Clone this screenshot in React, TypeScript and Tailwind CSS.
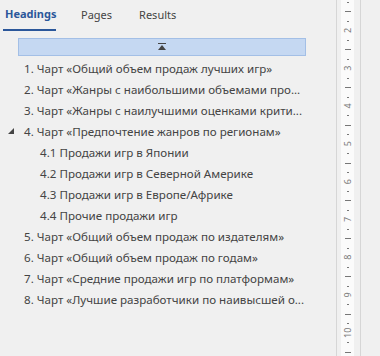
import React from 'react';

const items = [
    { label: '1. Чарт «Общий объем продаж лучших игр»', level: 1 },
    { label: '2. Чарт «Жанры с наибольшими объемами про...', level: 1 },
    { label: '3. Чарт «Жанры с наилучшими оценками крити...', level: 1 },
    { label: '4. Чарт «Предпочтение жанров по регионам»', level: 1, open: true },
    { label: '4.1 Продажи игр в Японии', level: 2 },
    { label: '4.2 Продажи игр в Северной Америке', level: 2 },
    { label: '4.3 Продажи игр в Европе/Африке', level: 2 },
    { label: '4.4 Прочие продажи игр', level: 2 },
    { label: '5. Чарт «Общий объем продаж по издателям»', level: 1 },
    { label: '6. Чарт «Общий объем продаж по годам»', level: 1 },
    { label: '7. Чарт «Средние продажи игр по платформам»', level: 1 },
    { label: '8. Чарт «Лучшие разработчики по наивысшей о...', level: 1 },
];

function Ruler() {
    const step = 9.45;
    const ticks = [];
    for (let i = 0; i < 38; i++) {
        const y = 2 + i * step;
        const k = i % 4;
        if (k === 3) {
            const n = (i + 1) / 4 + 1;
            ticks.push(
                <text
                    key={i}
                    x={0}
                    y={0}
                    transform={`translate(6.5 ${y}) rotate(-90)`}
                    textAnchor="middle"
                    dominantBaseline="central"
                    fontSize="9"
                    fill="#7a7a7a"
                    fontFamily="'Noto Sans', sans-serif"
                >
                    {n}
                </text>
            );
        } else if (k === 1) {
            ticks.push(<rect key={i} x={4} y={Math.round(y)} width={6} height={1} fill="#777" />);
        } else {
            ticks.push(<rect key={i} x={6} y={Math.round(y)} width={2} height={1} fill="#777" />);
        }
    }
    return (
        <svg width="13" height="356" className="block">
            {ticks}
        </svg>
    );
}

export default function App() {
    return (
        <div
            className="flex w-[380px] h-[356px] bg-[#f0f0f0] overflow-hidden text-[#444]"
            style={{ fontFamily: "'Noto Sans', 'Open Sans', sans-serif" }}
        >
            {/* Navigation pane */}
            <div className="w-[337px] shrink-0 border-r border-[#d6d6d6] flex flex-col">
                <div className="flex h-[31px] items-stretch text-[11px]">
                    <div className="ml-[3px] w-[53px] pl-[2px] flex items-center whitespace-nowrap font-bold text-[#2b579a] border-b-2 border-[#2b579a]">
                        Headings
                    </div>
                    <div className="ml-[25px] flex items-center">Pages</div>
                    <div className="ml-[27px] flex items-center">Results</div>
                </div>

                <div className="ml-[18px] w-[288px] mt-[7px] h-[18px] bg-[#c5d8f2] border border-[#a3bfe6] flex items-center justify-center">
                    <svg width="8" height="8" viewBox="0 0 8 8">
                        <rect x="0" y="0" width="8" height="1" fill="#444" />
                        <polygon points="4,2 8,7 0,7" fill="#444" />
                    </svg>
                </div>

                <ul className="mt-[2px] text-[11.6px]">
                    {items.map((it) => (
                        <li key={it.label} className="h-[21px] flex items-center relative">
                            {it.open && (
                                <svg className="absolute left-[8px] top-[7px]" width="6" height="6" viewBox="0 0 6 6">
                                    <polygon points="6,0 6,6 0,6" fill="#444" />
                                </svg>
                            )}
                            <span className={it.level === 1 ? 'ml-[24px] whitespace-nowrap' : 'ml-[40px] whitespace-nowrap'}>
                                {it.label}
                            </span>
                        </li>
                    ))}
                </ul>
            </div>

            {/* Vertical ruler */}
            <div className="ml-[4px] w-[13px] bg-[#fbfbfb] shrink-0">
                <Ruler />
            </div>
            <div className="w-[6px] shrink-0" />
            <div className="w-px bg-[#d6d6d6] shrink-0" />
        </div>
    );
}
